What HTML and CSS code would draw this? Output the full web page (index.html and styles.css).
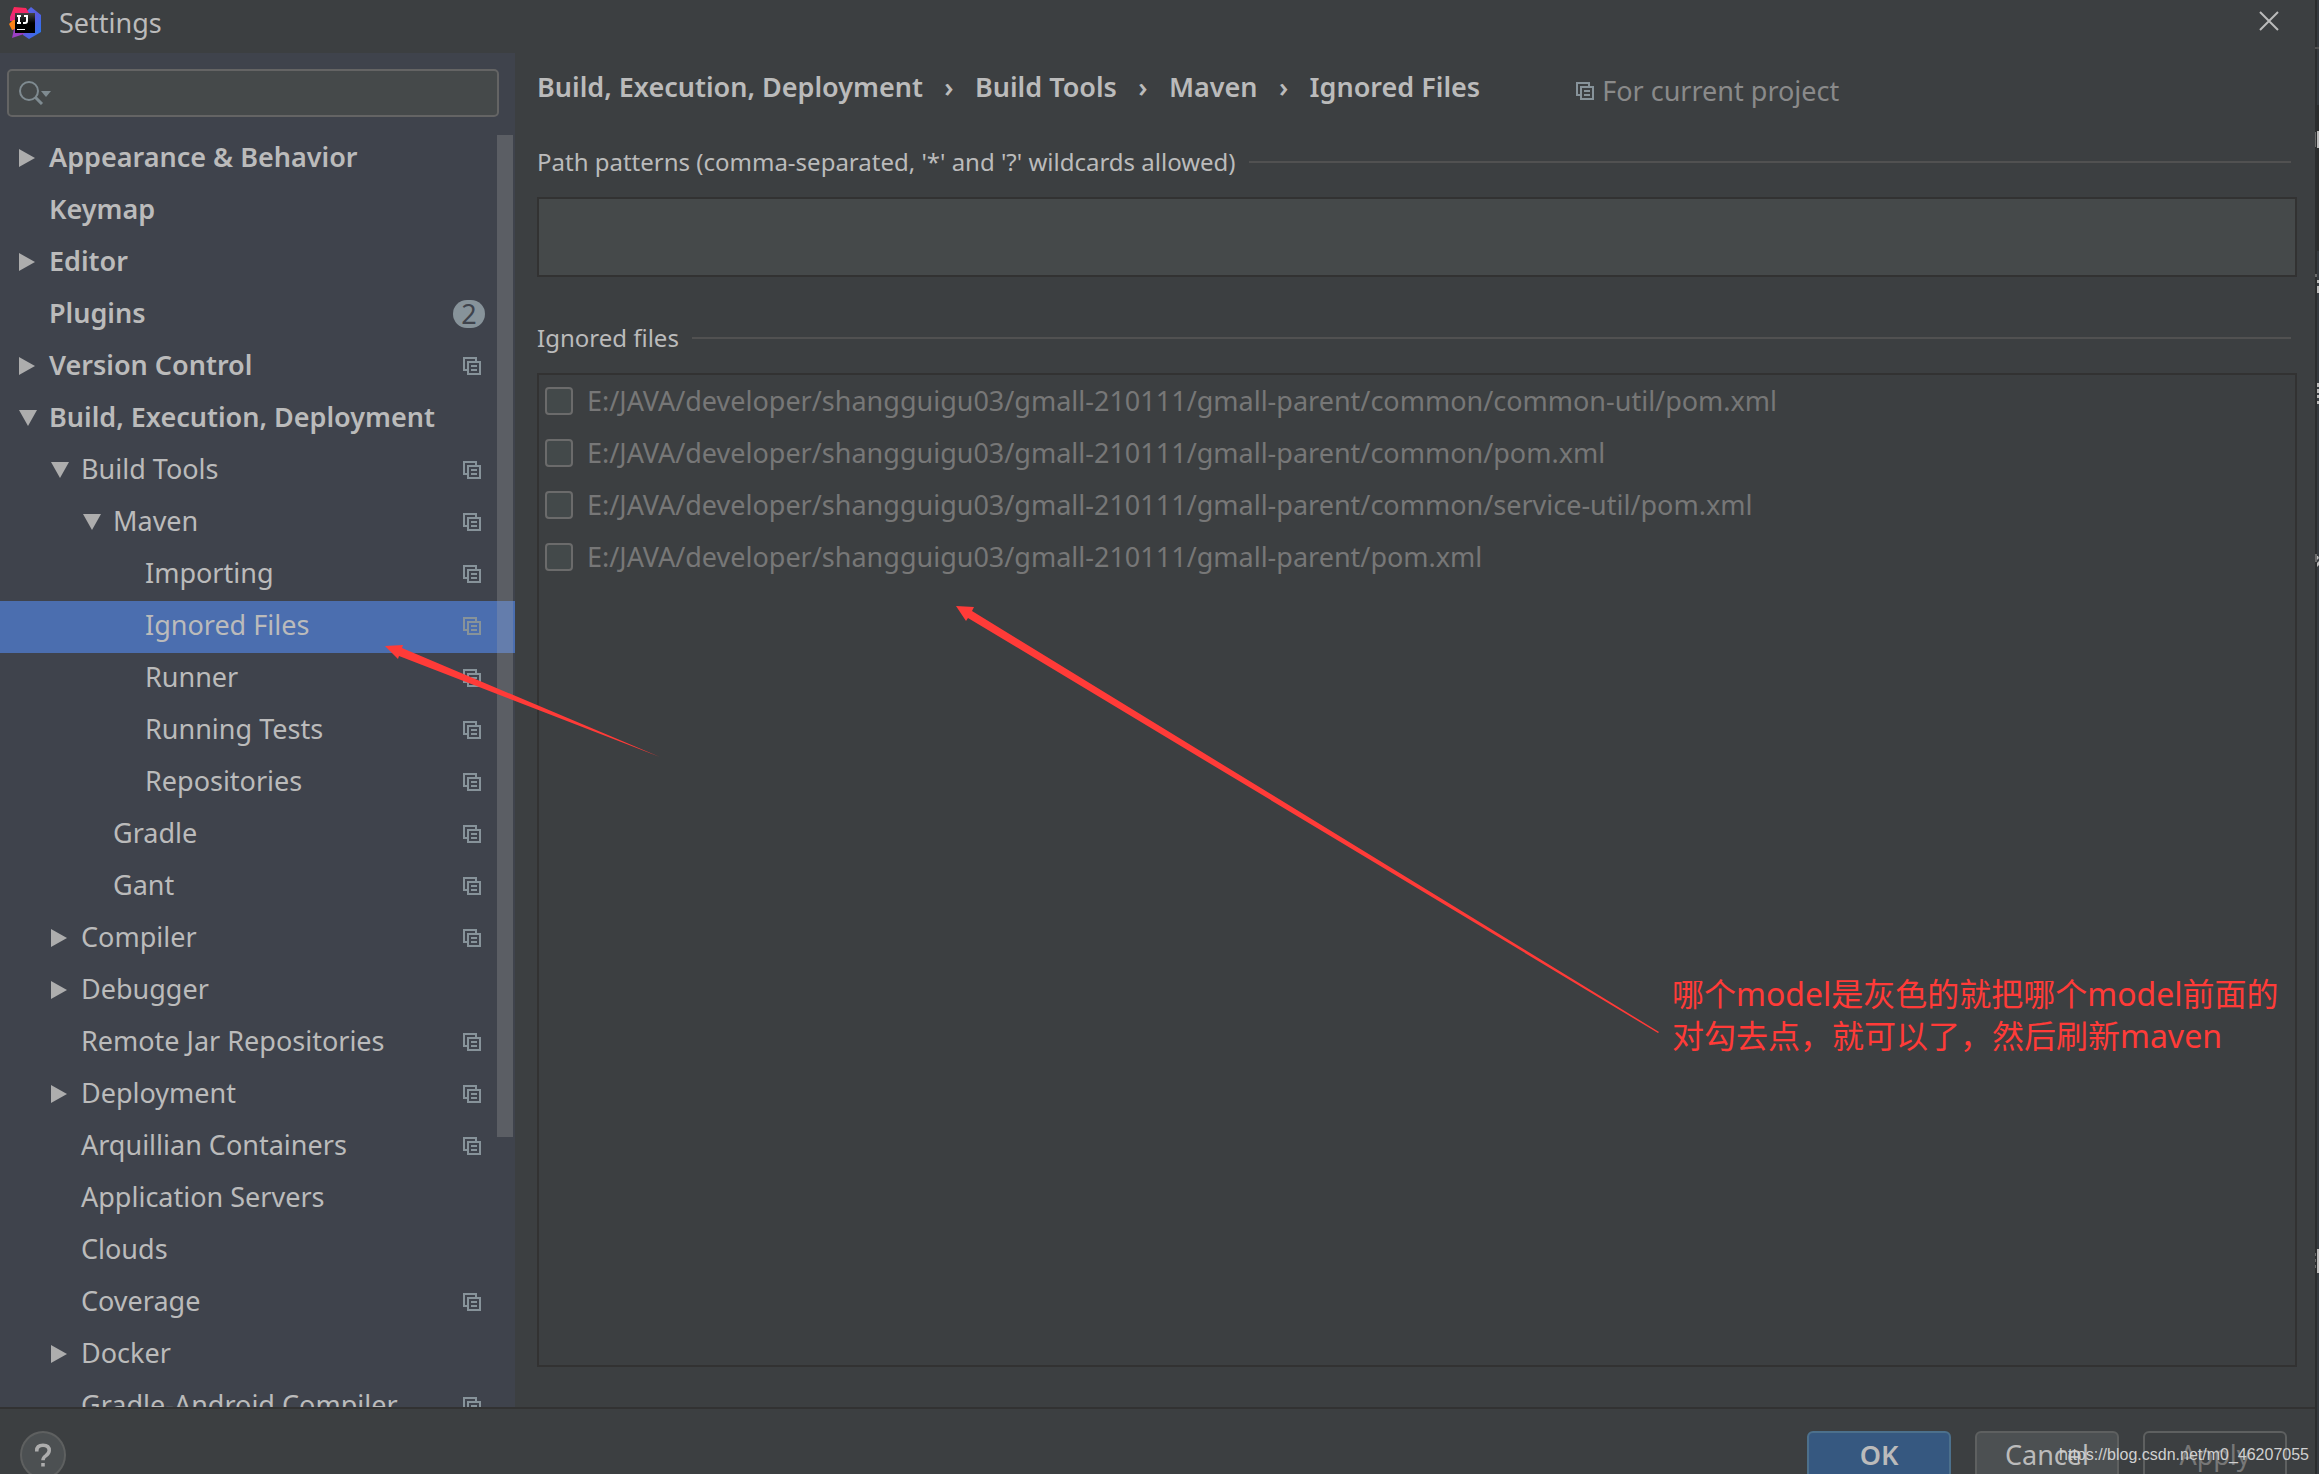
FILE: index.html
```html
<!DOCTYPE html>
<html lang="en">
<head>
<meta charset="utf-8">
<title>Settings</title>
<link rel="stylesheet" href="styles.css">
</head>
<body>
<svg class="defs" aria-hidden="true">
  <symbol id="project" viewBox="0 0 18 18">
    <path d="M13 4V1H1v12h3M5 5h12v12H5zM8 9h6M8 13h6" fill="none" stroke="currentColor" stroke-width="2"/>
  </symbol>
  <symbol id="closed" viewBox="0 0 18 18"><path d="M0 0l16 9-16 9z" fill="currentColor"/></symbol>
  <symbol id="open" viewBox="0 0 18 18"><path d="M0 1h18L9 17z" fill="currentColor"/></symbol>
</svg>
<div class="screen">
<div class="window">
  <header class="titlebar">
    <svg class="logo" viewBox="0 0 32 32" aria-hidden="true">
      <defs>
        <linearGradient id="g1" x1="0" y1="0" x2="1" y2="1"><stop offset="0" stop-color="#4d6fe8"/><stop offset=".5" stop-color="#5a5be0"/><stop offset="1" stop-color="#1f7bf0"/></linearGradient>
        <linearGradient id="g2" x1="0" y1="0" x2="0" y2="1"><stop offset="0" stop-color="#fe2857"/><stop offset="1" stop-color="#e02a8a"/></linearGradient>
        <linearGradient id="g3" x1="0" y1="0" x2="0" y2="1"><stop offset="0" stop-color="#444"/><stop offset=".5" stop-color="#000"/></linearGradient>
      </defs>
      <path d="M22 0l10 8v17L20 32l-6-4V8z" fill="url(#g1)"/>
      <path d="M5 0l12 1 3 5-6 8H1V10z" fill="url(#g2)"/>
      <path d="M0 17l4-4h4v9l-5 1z" fill="#fb8217"/>
      <path d="M5 22h12l-2 5-12 4z" fill="#9b3fc4"/>
      <path d="M6 6h20v20H6z" fill="url(#g3)"/>
      <path d="M8 9h4M10 9v7M8 16h4M15 9h3v5q0 2-2 2h-2" fill="none" stroke="#fff" stroke-width="2"/>
      <path d="M8 22h8v1H8z" fill="#fff"/>
    </svg>
    <h1 class="title">Settings</h1>
    <button class="close" aria-label="Close"><svg viewBox="0 0 20 20" aria-hidden="true"><path d="M1 1l18 18M19 1L1 19" stroke="currentColor" stroke-width="2"/></svg></button>
  </header>

  <div class="body">
    <aside class="sidebar">
      <label class="search">
        <svg viewBox="0 0 34 24" aria-hidden="true"><circle cx="10" cy="10" r="9" fill="none" stroke="currentColor" stroke-width="2"/><path d="M16 16l7 7" stroke="currentColor" stroke-width="3"/><path d="M22 10h10l-5 6z" fill="currentColor"/></svg>
        <input type="text" aria-label="Search settings">
      </label>
      <nav class="tree">
        <ul class="items">
          <li class="item top"><svg class="arrow"><use href="#closed"/></svg><span>Appearance &amp; Behavior</span></li>
          <li class="item top"><i class="arrow"></i><span>Keymap</span></li>
          <li class="item top"><svg class="arrow"><use href="#closed"/></svg><span>Editor</span></li>
          <li class="item top"><i class="arrow"></i><span>Plugins</span><b class="badge">2</b></li>
          <li class="item top"><svg class="arrow"><use href="#closed"/></svg><span>Version Control</span><svg class="mark"><use href="#project"/></svg></li>
          <li class="item top"><svg class="arrow"><use href="#open"/></svg><span>Build, Execution, Deployment</span></li>
          <li class="item l1"><svg class="arrow"><use href="#open"/></svg><span>Build Tools</span><svg class="mark"><use href="#project"/></svg></li>
          <li class="item l2"><svg class="arrow"><use href="#open"/></svg><span>Maven</span><svg class="mark"><use href="#project"/></svg></li>
          <li class="item l3"><i class="arrow"></i><span>Importing</span><svg class="mark"><use href="#project"/></svg></li>
          <li class="item l3 selected"><i class="arrow"></i><span>Ignored Files</span><svg class="mark"><use href="#project"/></svg></li>
          <li class="item l3"><i class="arrow"></i><span>Runner</span><svg class="mark"><use href="#project"/></svg></li>
          <li class="item l3"><i class="arrow"></i><span>Running Tests</span><svg class="mark"><use href="#project"/></svg></li>
          <li class="item l3"><i class="arrow"></i><span>Repositories</span><svg class="mark"><use href="#project"/></svg></li>
          <li class="item l2"><i class="arrow"></i><span>Gradle</span><svg class="mark"><use href="#project"/></svg></li>
          <li class="item l2"><i class="arrow"></i><span>Gant</span><svg class="mark"><use href="#project"/></svg></li>
          <li class="item l1"><svg class="arrow"><use href="#closed"/></svg><span>Compiler</span><svg class="mark"><use href="#project"/></svg></li>
          <li class="item l1"><svg class="arrow"><use href="#closed"/></svg><span>Debugger</span></li>
          <li class="item l1"><i class="arrow"></i><span>Remote Jar Repositories</span><svg class="mark"><use href="#project"/></svg></li>
          <li class="item l1"><svg class="arrow"><use href="#closed"/></svg><span>Deployment</span><svg class="mark"><use href="#project"/></svg></li>
          <li class="item l1"><i class="arrow"></i><span>Arquillian Containers</span><svg class="mark"><use href="#project"/></svg></li>
          <li class="item l1"><i class="arrow"></i><span>Application Servers</span></li>
          <li class="item l1"><i class="arrow"></i><span>Clouds</span></li>
          <li class="item l1"><i class="arrow"></i><span>Coverage</span><svg class="mark"><use href="#project"/></svg></li>
          <li class="item l1"><svg class="arrow"><use href="#closed"/></svg><span>Docker</span></li>
          <li class="item l1"><i class="arrow"></i><span>Gradle-Android Compiler</span><svg class="mark"><use href="#project"/></svg></li>
        </ul>
        <div class="scrollbar"><div class="thumb"></div></div>
      </nav>
    </aside>

    <main class="content">
      <div class="heading">
        <nav class="crumbs"><span>Build, Execution, Deployment</span><span class="sep">›</span><span>Build Tools</span><span class="sep">›</span><span>Maven</span><span class="sep">›</span><span>Ignored Files</span></nav>
        <p class="scope"><svg class="mark"><use href="#project"/></svg>For current project</p>
      </div>
      <label class="section" for="patterns">Path patterns (comma-separated, '*' and '?' wildcards allowed)</label>
      <input class="patterns" id="patterns" type="text">
      <h2 class="section">Ignored files</h2>
      <div class="files">
        <label class="file"><input type="checkbox">E:/JAVA/developer/shangguigu03/gmall-210111/gmall-parent/common/common-util/pom.xml</label>
        <label class="file"><input type="checkbox">E:/JAVA/developer/shangguigu03/gmall-210111/gmall-parent/common/pom.xml</label>
        <label class="file"><input type="checkbox">E:/JAVA/developer/shangguigu03/gmall-210111/gmall-parent/common/service-util/pom.xml</label>
        <label class="file"><input type="checkbox">E:/JAVA/developer/shangguigu03/gmall-210111/gmall-parent/pom.xml</label>
      </div>
    </main>
  </div>

  <footer class="footer">
    <button class="help" aria-label="Help"><svg viewBox="0 0 18 26" aria-hidden="true"><path d="M2 9V8q0-6 7-6t7 6q0 3-4 6-3 2-3 5M9 22v4" fill="none" stroke="currentColor" stroke-width="4"/></svg></button>
    <button class="btn primary">OK</button>
    <button class="btn">Cancel</button>
    <button class="btn apply" disabled>Apply</button>
  </footer>
</div>
<svg class="behind" aria-hidden="true">
  <path d="M2 0h2v1474H2z" fill="#363b40"/>
  <path d="M0 0h2v1474H0zM0 105h4v146H0z" fill="#2b2d2e"/>
  <path d="M0 47h4v2H0z" fill="#515151"/>
  <path d="M2 131h2v17H2zM2 280h2v3H2zM2 286h2v7H2zM2 383h2v4H2zM2 389h2v4H2zM2 395h2v3H2zM2 401h2v3H2zM2 556h1l1 2-2 2zM4 561v4l-2 2v-4zM2 1249h2v24H2z" fill="#bbbbbb"/>
  <path d="M0 132h1v15H0zM0 274h2v3H0zM0 554h2v8H0zM0 1253h1v3H0zM0 1259h1v3H0zM0 1265h1v3H0z" fill="#6b6b6b"/>
</svg>
</div>

<svg class="arrows" aria-hidden="true">
  <path d="M385 646L403 645 402 648 660 757 399 656 398 659z"/>
  <path d="M956 606L974 607 972 611 1659 1032 1658 1033 968 618 966 621z"/>
</svg>
<p class="note">哪个model是灰色的就把哪个model前面的<br>对勾去点，就可以了，然后刷新maven</p>
<p class="watermark">https://blog.csdn.net/m0_46207055</p>
</body>
</html>
```
FILE: styles.css
```css
* { box-sizing: border-box; }
body {
  margin: 0;
  background: #3c3f41;
  color: #bbbbbb;
  font: 27px/36px "Noto Sans", "Noto Sans CJK SC", sans-serif;
  overflow: hidden;
}
h1, h2, p, ul { margin: 0; padding: 0; font-size: inherit; font-weight: 400; list-style: none; }
button, input { font: inherit; color: inherit; }
svg { display: block; flex: none; }
.defs { position: absolute; width: 0; height: 0; }

.screen { display: flex; height: 100vh; overflow: hidden; }
.window { flex: 1; min-width: 0; display: flex; flex-direction: column; }
.behind { width: 4px; height: 100%; }

.titlebar { display: flex; align-items: center; height: 53px; flex: none; padding: 0 36px 8px 9px; gap: 18px; }
.logo { width: 32px; height: 32px; }
.title { flex: 1; }
.close { padding: 0 0 4px; border: 0; background: none; }
.close svg { width: 20px; height: 20px; }

.body { flex: 1; min-height: 0; display: flex; }
.sidebar { width: 515px; flex: none; display: flex; flex-direction: column; background: #3f434c; }
.search {
  display: flex; align-items: center; flex: none; height: 48px; margin: 16px 16px 16px 7px; padding: 0 10px;
  border: 2px solid #646464; border-radius: 5px; background: #45494a; color: #7f8b91;
}
.search svg { width: 34px; height: 24px; }
.search input { flex: 1; border: 0; background: none; outline: 0; }
.tree { flex: 1; min-height: 0; display: grid; grid-template-columns: 1fr; overflow: hidden; }
.items, .scrollbar { grid-area: 1 / 1; }
.item { display: flex; align-items: center; gap: 12px; height: 52px; padding: 0 34px 2px 19px; white-space: nowrap; }
.item span { flex: 1; padding-bottom: 2px; }
.top { font-weight: 600; }
.l1 { padding-left: 51px; }
.l2 { padding-left: 83px; }
.l3 { padding-left: 115px; }
.selected { background: #4b6eaf; }
.arrow { width: 18px; height: 18px; color: #adadad; }
.mark { width: 18px; height: 18px; color: #87939a; }
.badge { width: 32px; height: 28px; margin-right: -4px; border-radius: 14px; background: #87939a; color: #3f434c; font-weight: 400; line-height: 28px; text-align: center; }
.scrollbar { justify-self: end; width: 18px; padding-top: 2px; }
.thumb { width: 16px; height: 1002px; background: rgba(166, 166, 166, .28); }

.content { flex: 1; min-width: 0; display: flex; flex-direction: column; padding: 16px 18px 40px 22px; }
.heading { display: flex; gap: 96px; height: 75px; white-space: nowrap; }
.crumbs { display: flex; font-weight: 600; }
.sep { width: 52px; text-align: center; }
.scope { display: flex; align-items: center; gap: 8px; height: 44px; color: #8a8a8a; }
.section { display: flex; align-items: center; gap: 13px; height: 36px; padding-right: 6px; font-size: 24px; white-space: nowrap; }
.section::after { content: ""; flex: 1; height: 2px; background: #515151; }
.patterns { width: 100%; height: 80px; margin: 17px 0 43px; padding: 0 10px; border: 2px solid #323232; background: #45494a; }
.files { flex: 1; margin-top: 17px; padding: 0 6px; border: 2px solid #323232; }
.file { display: flex; align-items: center; gap: 14px; height: 52px; color: #777777; white-space: nowrap; }
.file input { appearance: none; width: 28px; height: 28px; margin: 0; border: 2px solid #6b6b6b; border-radius: 4px; background: #43494a; }

.footer { flex: none; display: flex; gap: 24px; height: 67px; padding: 22px 28px 0 20px; border-top: 2px solid #323232; }
.help { display: grid; place-items: center; width: 46px; height: 48px; margin-right: auto; padding: 0; border: 2px solid #5e6060; border-radius: 50%; background: #4c5052; color: #adadad; }
.help svg { width: 16px; height: 24px; }
.btn { width: 144px; height: 48px; padding: 0; border: 2px solid #5e6060; border-radius: 6px; background: #4c5052; }
.primary { border-color: #4c708c; background: #365880; font-weight: 600; }
.apply { background: none; color: #777777; }

.arrows { position: absolute; top: 0; left: 0; width: 100%; height: 100%; fill: #ff3b38; pointer-events: none; }
.note { position: absolute; top: 973px; left: 1672px; color: #ff3b38; font-size: 32px; line-height: 42px; white-space: nowrap; }
.watermark { position: absolute; right: 10px; bottom: 8px; color: #d0d0d0; font: 16px/22px "Liberation Sans", sans-serif; }
```
